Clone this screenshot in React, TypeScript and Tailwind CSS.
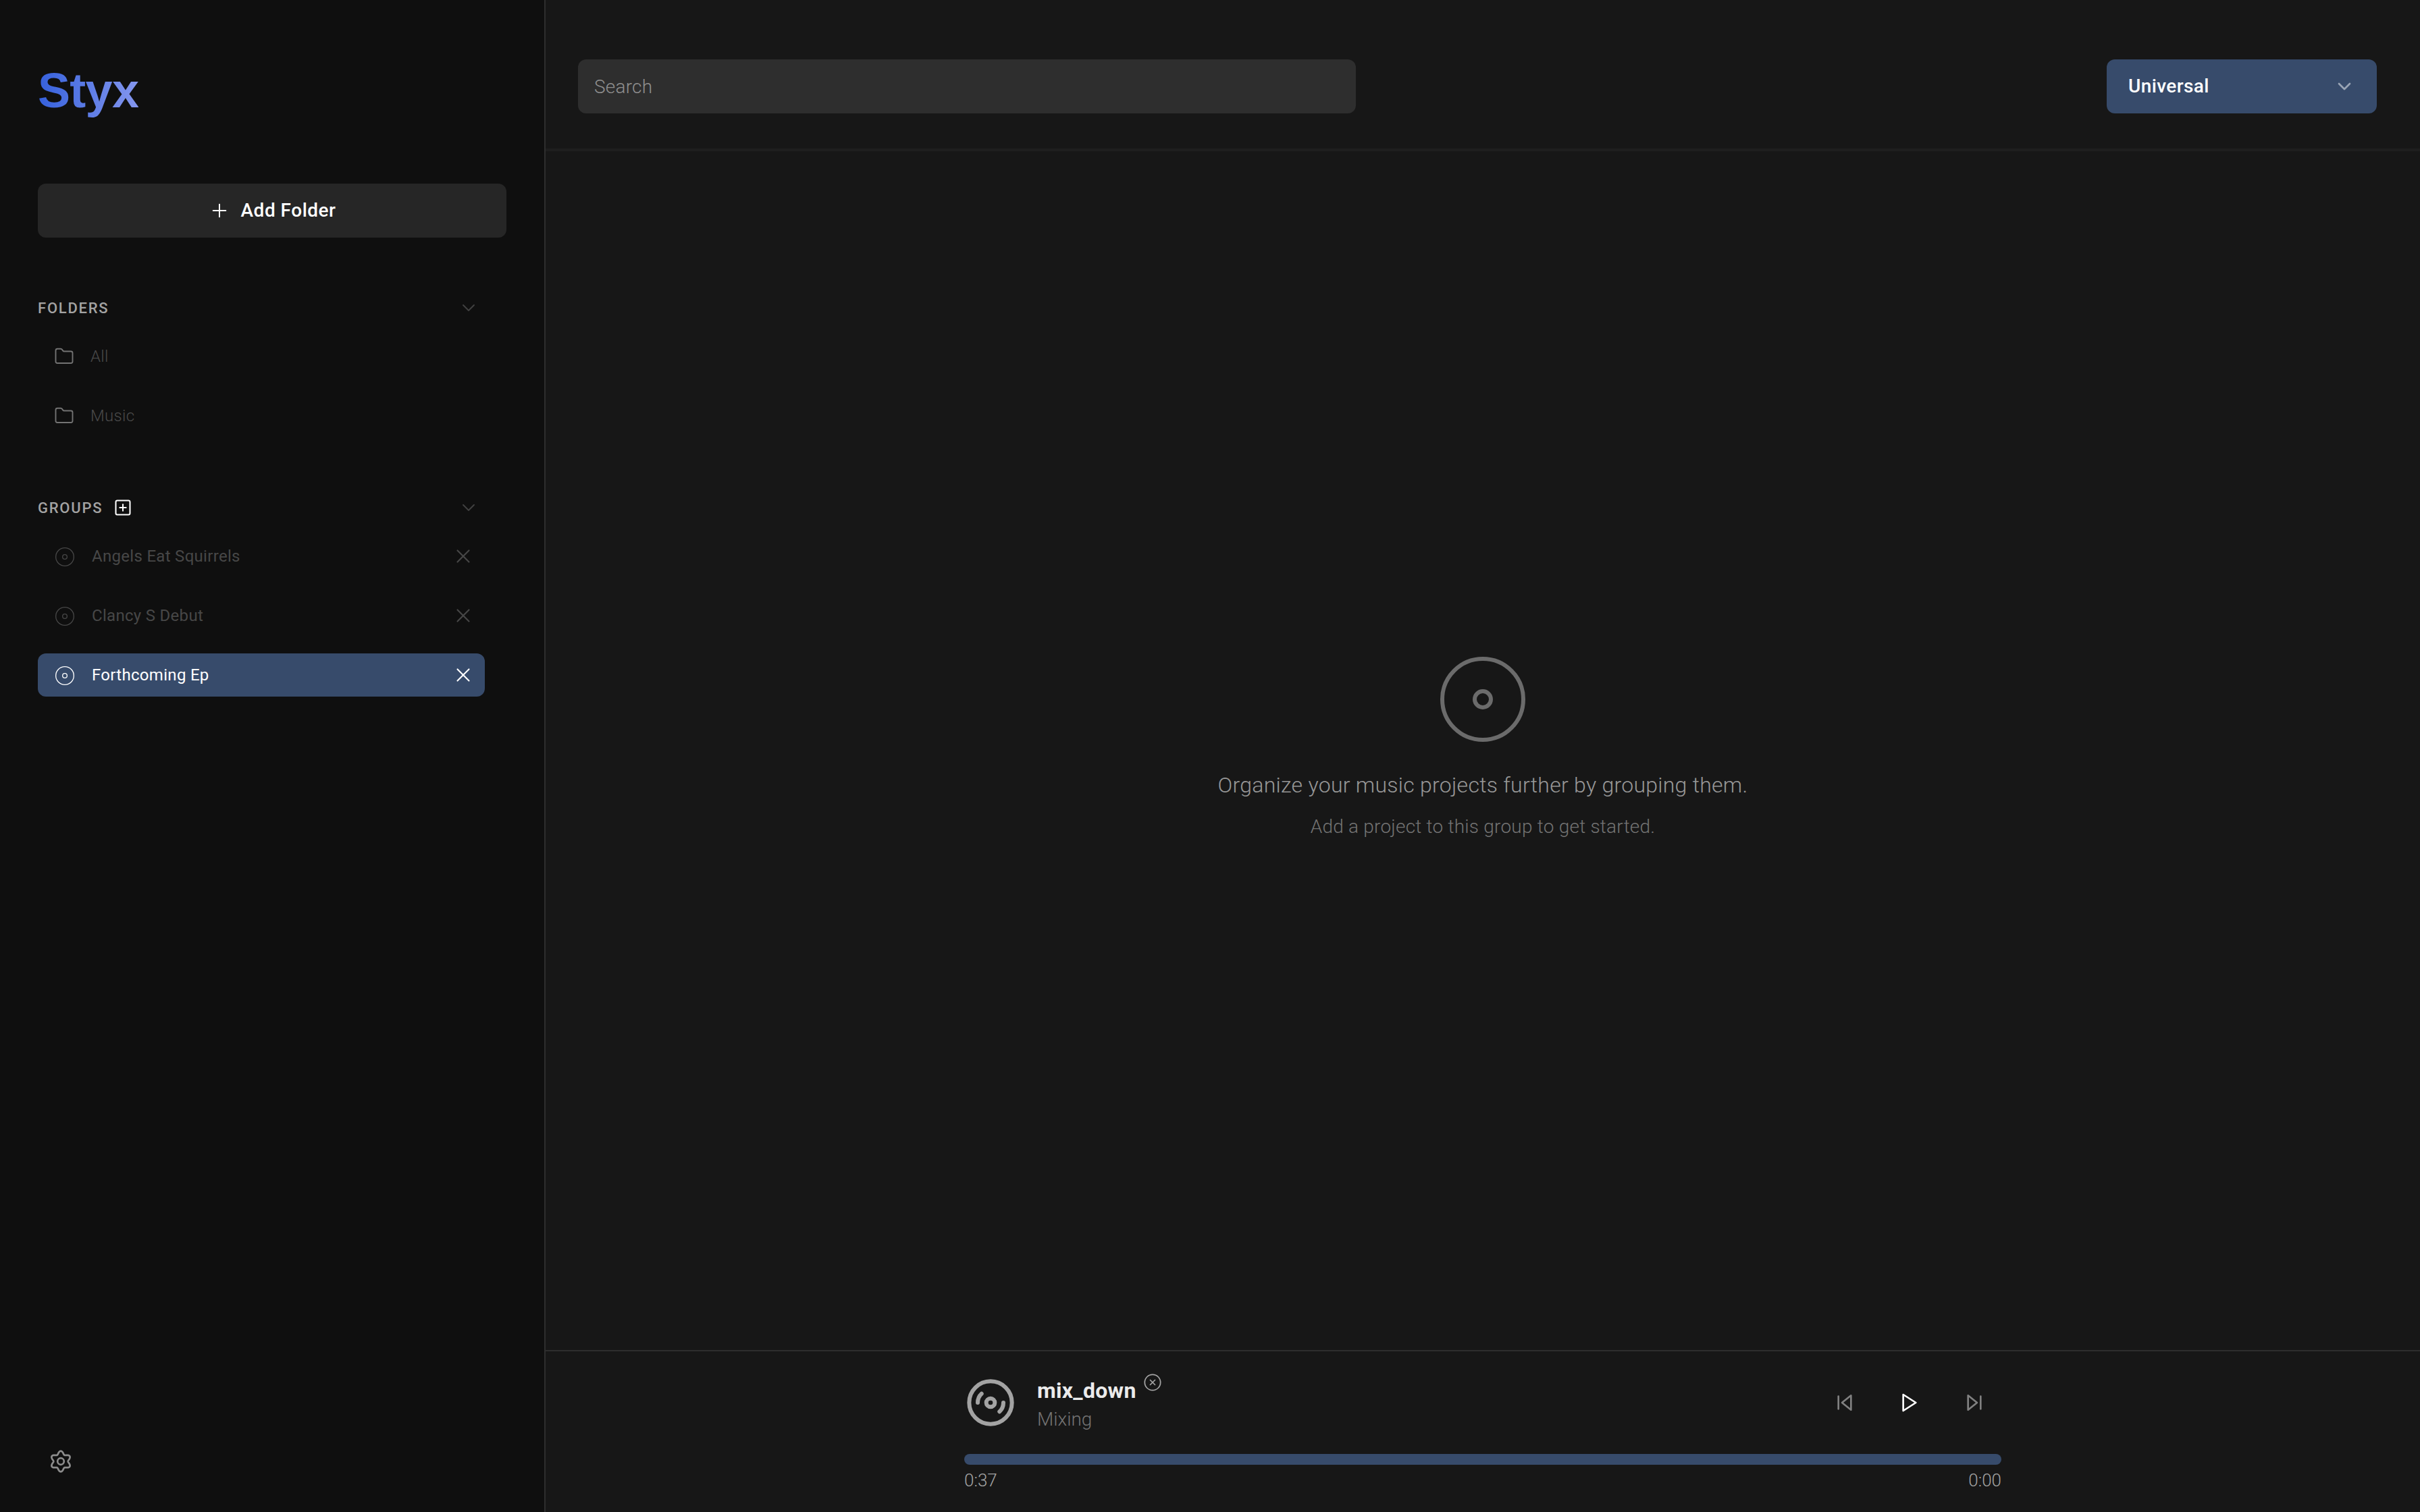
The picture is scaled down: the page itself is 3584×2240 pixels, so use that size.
import React from "react";
import { Plus, Folder, X, ChevronDown, SquarePlus, CircleX, Disc3 } from "lucide-react";

function DiscIcon({ size, strokeWidth, className, r = 2 }: { size: number; strokeWidth: number; className?: string; r?: number }) {
  return (
    <svg width={size} height={size} viewBox="0 0 24 24" fill="none" stroke="currentColor" strokeWidth={strokeWidth} className={className}>
      <circle cx="12" cy="12" r="10" />
      <circle cx="12" cy="12" r={r} />
    </svg>
  );
}

function gearPath() {
  const pts: string[] = [];
  for (let i = 0; i < 180; i++) {
    const t = (i / 180) * Math.PI * 2;
    const rad = 13 + 2.3 * Math.cos(6 * t);
    const x = 18 + rad * Math.sin(t);
    const y = 18 - rad * Math.cos(t);
    pts.push(`${x.toFixed(2)} ${y.toFixed(2)}`);
  }
  return "M" + pts.join("L") + "Z";
}

function SectionHeader({ label, extra }: { label: string; extra?: React.ReactNode }) {
  return (
    <div className="flex h-8 items-center justify-between pr-[40px]">
      <div className="flex items-center gap-[16px]">
        <span className="text-[22px] font-medium tracking-[0.08em] text-[#a3a3a3]">{label}</span>
        {extra}
      </div>
      <ChevronDown size={32} strokeWidth={1.5} className="text-[#404040]" />
    </div>
  );
}

function FolderRow({ label }: { label: string }) {
  return (
    <div className="flex h-16 items-center gap-[24px] pl-[24px]">
      <Folder size={30} strokeWidth={1.5} className="text-[#737373]" />
      <span className="text-[24px] font-light tracking-[0.3px] text-[#4a4a4a]">{label}</span>
    </div>
  );
}

function GroupRow({ label, active }: { label: string; active?: boolean }) {
  return (
    <div className={active ? "flex h-16 w-[662px] items-center rounded-xl bg-[#374b6b] pl-[24px] pr-[15px] text-white" : "flex h-16 w-[662px] items-center rounded-xl pl-[24px] pr-[15px] text-[#474747]"}>
      <DiscIcon size={32} strokeWidth={1} r={2.5} className="mt-[2px] shrink-0" />
      <span className="ml-[24px] flex-1 text-[24px] tracking-[0.3px]">{label}</span>
      <X size={34} strokeWidth={1.5} />
    </div>
  );
}

export default function App() {
  return (
    <div className="flex h-[2240px] w-[3584px] overflow-hidden bg-[#171717] font-[Roboto,sans-serif]">
      <aside className="flex h-full w-[808px] shrink-0 flex-col border-r-2 border-[#2e2e2e] bg-[#0f0f0f] px-[56px]">
        <div className="mt-[94px] h-20 w-fit bg-linear-to-r from-[#3560dc] to-[#8496ee] bg-clip-text font-['Liberation_Sans',sans-serif] text-[72px] leading-[80px] font-bold tracking-[-0.01em] text-transparent">
          Styx
        </div>
        <button className="mt-[98px] flex h-20 w-[694px] items-center justify-center gap-[16px] rounded-xl bg-[#262626] text-[28px] font-medium tracking-[0.5px] text-white">
          <Plus size={32} strokeWidth={1.5} />
          Add Folder
        </button>
        <div className="mt-[88px]">
          <SectionHeader label="FOLDERS" />
        </div>
        <div className="mt-6 flex flex-col gap-6">
          <FolderRow label="All" />
          <FolderRow label="Music" />
        </div>
        <div className="mt-[88px]">
          <SectionHeader label="GROUPS" extra={<SquarePlus size={28} strokeWidth={1.75} className="text-white" />} />
        </div>
        <div className="mt-6 flex flex-col gap-6">
          <GroupRow label="Angels Eat Squirrels" />
          <GroupRow label="Clancy S Debut" />
          <GroupRow label="Forthcoming Ep" active />
        </div>
        <div className="mt-auto mb-[57px] ml-[16px]">
          <svg width="36" height="36" viewBox="0 0 36 36" fill="none" stroke="currentColor" strokeWidth="2.7" className="text-[#8c8c8c]">
            <path d={gearPath()} strokeLinejoin="round" />
            <circle cx="18" cy="18" r="4.8" />
          </svg>
        </div>
      </aside>

      <main className="flex h-full flex-1 flex-col">
        <header className="flex h-[224px] shrink-0 items-start justify-between border-b-4 border-[#1f1f1f] pt-[88px] pr-[64px] pl-[48px]">
          <input
            readOnly
            placeholder="Search"
            className="h-20 w-[1152px] rounded-xl bg-[#2e2e2e] px-[24px] text-[28px] font-light tracking-[0.2px] text-white outline-none placeholder:text-[#8f8f8f]"
          />
          <div className="flex h-20 w-[400px] items-center justify-between rounded-xl bg-[#374b6b] pr-[32px] pl-[32px] text-[28px] font-medium tracking-[0.4px] text-white">
            Universal
            <ChevronDown size={32} strokeWidth={2} className="text-[#9aa5b5]" />
          </div>
        </header>

        <section className="flex flex-1 flex-col items-center justify-center pb-[15px]">
          <DiscIcon size={144} strokeWidth={1} className="text-[#6b6b6b]" />
          <p className="mt-[31px] text-[32px] leading-[48px] font-light tracking-[0.26px] text-[#979797]">
            Organize your music projects further by grouping them.
          </p>
          <p className="mt-[18px] text-[28px] leading-[40px] font-light tracking-[0.22px] text-[#737373]">
            Add a project to this group to get started.
          </p>
        </section>

        <footer className="flex h-[240px] shrink-0 justify-center border-t-2 border-[#2e2e2e] pt-[36px]">
          <div className="w-[1536px]">
            <div className="flex h-20 items-center">
              <Disc3 size={76} strokeWidth={1.9} className="ml-[1px] shrink-0 text-[#a3a3a3]" />
              <div className="ml-[31px] flex flex-col pt-[6px]">
                <div className="flex items-start">
                  <span className="text-[32px] leading-[40px] font-bold tracking-[0.3px] text-[#ebebeb]">mix_down</span>
                  <CircleX size={28} strokeWidth={1.5} className="-mt-[6px] ml-[10px] text-[#a3a3a3]" />
                </div>
                <span className="mt-[3px] text-[28px] leading-[40px] font-light text-[#737373]">Mixing</span>
              </div>
              <div className="mr-[24px] ml-auto flex items-center gap-[64px]">
                <svg width="32" height="32" viewBox="0 0 24 24" fill="none" stroke="currentColor" strokeWidth="2" strokeLinecap="round" strokeLinejoin="round" className="text-[#808080]">
                  <polygon points="19 20 9 12 19 4 19 20" />
                  <line x1="5" y1="19" x2="5" y2="5" />
                </svg>
                <svg width="32" height="32" viewBox="0 0 24 24" fill="none" stroke="currentColor" strokeWidth="2" strokeLinecap="round" strokeLinejoin="round" className="text-white">
                  <polygon points="5 3 19 12 5 21 5 3" />
                </svg>
                <svg width="32" height="32" viewBox="0 0 24 24" fill="none" stroke="currentColor" strokeWidth="2" strokeLinecap="round" strokeLinejoin="round" className="text-[#808080]">
                  <polygon points="5 4 15 12 5 20 5 4" />
                  <line x1="19" y1="5" x2="19" y2="19" />
                </svg>
              </div>
            </div>
            <div className="mt-[36px] h-4 w-full rounded-full bg-[#374b6b]" />
            <div className="mt-[7px] flex justify-between text-[26px] leading-[32px] font-light text-[#a3a3a3]">
              <span>0:37</span>
              <span>0:00</span>
            </div>
          </div>
        </footer>
      </main>
    </div>
  );
}
